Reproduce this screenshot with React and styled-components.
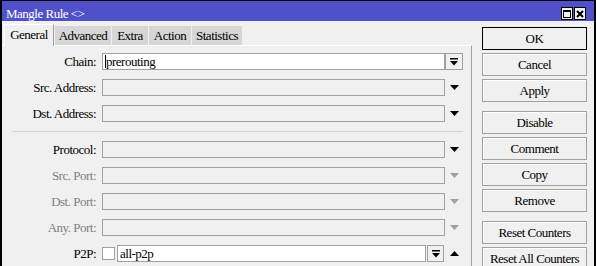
import React from "react";
import styled, { createGlobalStyle, css } from "styled-components";

const Global = createGlobalStyle`
  html, body { margin: 0; padding: 0; background: #f0f0f0; }
  * { box-sizing: border-box; }
  body {
    font-family: "Liberation Serif", "Times New Roman", serif;
    font-size: 13px;
    letter-spacing: -0.5px;
    color: #000;
  }
`;

const Window = styled.div`
  width: 596px;
  height: 266px;
  overflow: hidden;
  border-top: 1px solid #000;
  border-left: 2px solid #000;
  border-right: 2px solid #000;
  background: #f0f0f0;
  display: flex;
  flex-direction: column;
`;

const TitleBar = styled.div`
  height: 20px;
  flex: none;
  background: #5050c8;
  display: flex;
  align-items: flex-start;
  justify-content: space-between;
  padding: 0 8px 0 4px;
`;

const Title = styled.div`
  color: #fff;
  line-height: 14px;
  padding-top: 6px;
  white-space: nowrap;
`;

const TitleButtons = styled.div`
  display: flex;
  gap: 1px;
  padding-top: 6px;
`;

const TitleBtn = styled.div`
  width: 12px;
  height: 13px;
  border: 1px solid #000;
  background: #f0f0f0;
  display: flex;
  align-items: center;
  justify-content: center;
`;

const Body = styled.div`
  flex: 1;
  display: flex;
  min-height: 0;
`;

const Main = styled.div`
  width: 470px;
  flex: none;
  display: flex;
  flex-direction: column;
`;

const TabBar = styled.div`
  height: 24px;
  flex: none;
  display: flex;
  align-items: flex-end;
  gap: 1px;
  padding-left: 2px;
`;

const Tab = styled.div`
  width: ${(p) => p.$w}px;
  height: 19px;
  line-height: 19px;
  text-align: center;
  background: #d6d6d6;
  white-space: nowrap;
  ${(p) =>
    p.$active &&
    css`
      height: 22px;
      margin-bottom: -1px;
      position: relative;
      z-index: 1;
      background: #f0f0f0;
      border-top: 1px solid #fff;
      border-left: 1px solid #fff;
      border-right: 1px solid #a0a0a0;
    `}
`;

const Panel = styled.div`
  flex: 1;
  border-top: 1px solid #fff;
  border-right: 1px solid #a0a0a0;
  padding-top: 7px;
  display: flex;
  flex-direction: column;
  gap: 9px;
`;

const Row = styled.div`
  display: flex;
  align-items: center;
  height: 17px;
`;

const Label = styled.div`
  width: 94px;
  margin-right: 6px;
  text-align: right;
  line-height: 17px;
  white-space: nowrap;
  color: ${(p) => (p.$disabled ? "#808080" : "#000")};
`;

const Field = styled.div`
  width: 361px;
  height: 17px;
  display: flex;
  align-items: center;
`;

const Input = styled.div`
  flex: 1;
  height: 17px;
  border: 1px solid #a0a0a0;
  background: ${(p) => (p.$editable ? "#fff" : "#f0f0f0")};
  line-height: 15px;
  padding-left: 2px;
  margin-right: ${(p) => p.$mr || 0}px;
  white-space: nowrap;
  overflow: hidden;
  display: flex;
  align-items: center;
`;

const Caret = styled.span`
  display: inline-block;
  width: 1px;
  height: 13px;
  background: #000;
`;

const DropBtn = styled.div`
  width: ${(p) => p.$w}px;
  height: 17px;
  flex: none;
  border: 1px solid #a0a0a0;
  background: #f0f0f0;
  display: flex;
  align-items: center;
  justify-content: center;
`;

const ArrowSlot = styled.div`
  width: 18px;
  height: 17px;
  flex: none;
  margin-left: ${(p) => p.$ml || 0}px;
  display: flex;
  align-items: center;
  justify-content: center;
`;

const Check = styled.div`
  width: 13px;
  height: 13px;
  flex: none;
  border: 1px solid #a0a0a0;
  background: #fff;
  margin-right: 2px;
`;

const Separator = styled.div`
  height: 1px;
  background: #d4d4d4;
  margin: 0 8px 0 10px;
`;

const ButtonColumn = styled.div`
  width: 105px;
  margin-left: 10px;
  padding-top: 6px;
  display: flex;
  flex-direction: column;
  gap: 9px;
`;

const ButtonGroup = styled.div`
  display: flex;
  flex-direction: column;
  gap: 3px;
`;

const Button = styled.div`
  height: 23px;
  line-height: 21px;
  text-align: center;
  white-space: nowrap;
  background: #f0f0f0;
  border: 1px solid ${(p) => (p.$default ? "#000" : "#a0a0a0")};
  box-shadow: ${(p) => (p.$default ? "none" : "inset 1px 1px 0 #fff")};
`;

const DropIcon = () => (
  <svg width="8" height="8" viewBox="0 0 8 8">
    <rect x="0" y="0" width="8" height="1.5" fill="#000" />
    <polygon points="0,3 8,3 4,7.5" fill="#000" />
  </svg>
);

const Arrow = ({ up, disabled }) => (
  <svg width="9" height="5" viewBox="0 0 9 5">
    <polygon
      points={up ? "0,5 9,5 4.5,0" : "0,0 9,0 4.5,5"}
      fill={disabled ? "#a0a0a0" : "#000"}
    />
  </svg>
);

const tabs = [
  ["General", 50, true],
  ["Advanced", 56],
  ["Extra", 36],
  ["Action", 42],
  ["Statistics", 50],
];

const ArrowRow = ({ label, disabled }) => (
  <Row>
    <Label $disabled={disabled}>{label}</Label>
    <Field>
      <Input />
      <ArrowSlot>
        <Arrow disabled={disabled} />
      </ArrowSlot>
    </Field>
  </Row>
);

export default function App() {
  return (
    <>
      <Global />
      <Window>
        <TitleBar>
          <Title>Mangle Rule &lt;&gt;</Title>
          <TitleButtons>
            <TitleBtn>
              <svg width="8" height="8" viewBox="0 0 8 8">
                <rect x="0.5" y="0.5" width="7" height="7" fill="none" stroke="#000" />
                <rect x="0" y="0" width="8" height="2" fill="#000" />
              </svg>
            </TitleBtn>
            <TitleBtn>
              <svg width="8" height="8" viewBox="0 0 8 8">
                <path d="M1 1 L7 7 M7 1 L1 7" stroke="#000" strokeWidth="2" />
              </svg>
            </TitleBtn>
          </TitleButtons>
        </TitleBar>
        <Body>
          <Main>
            <TabBar>
              {tabs.map(([t, w, a]) => (
                <Tab key={t} $w={w} $active={a}>
                  {t}
                </Tab>
              ))}
            </TabBar>
            <Panel>
              <Row>
                <Label>Chain:</Label>
                <Field>
                  <Input $editable>
                    <Caret />
                    prerouting
                  </Input>
                  <DropBtn $w={18}>
                    <DropIcon />
                  </DropBtn>
                </Field>
              </Row>
              <ArrowRow label="Src. Address:" />
              <ArrowRow label="Dst. Address:" />
              <Separator />
              <ArrowRow label="Protocol:" />
              <ArrowRow label="Src. Port:" disabled />
              <ArrowRow label="Dst. Port:" disabled />
              <ArrowRow label="Any. Port:" disabled />
              <Row>
                <Label>P2P:</Label>
                <Field>
                  <Check />
                  <Input $editable $mr={1}>all-p2p</Input>
                  <DropBtn $w={17}>
                    <DropIcon />
                  </DropBtn>
                  <ArrowSlot $ml={1}>
                    <Arrow up />
                  </ArrowSlot>
                </Field>
              </Row>
            </Panel>
          </Main>
          <ButtonColumn>
            <ButtonGroup>
              <Button $default>OK</Button>
              <Button>Cancel</Button>
              <Button>Apply</Button>
            </ButtonGroup>
            <ButtonGroup>
              <Button>Disable</Button>
              <Button>Comment</Button>
              <Button>Copy</Button>
              <Button>Remove</Button>
            </ButtonGroup>
            <ButtonGroup>
              <Button>Reset Counters</Button>
              <Button>Reset All Counters</Button>
            </ButtonGroup>
          </ButtonColumn>
        </Body>
      </Window>
    </>
  );
}
